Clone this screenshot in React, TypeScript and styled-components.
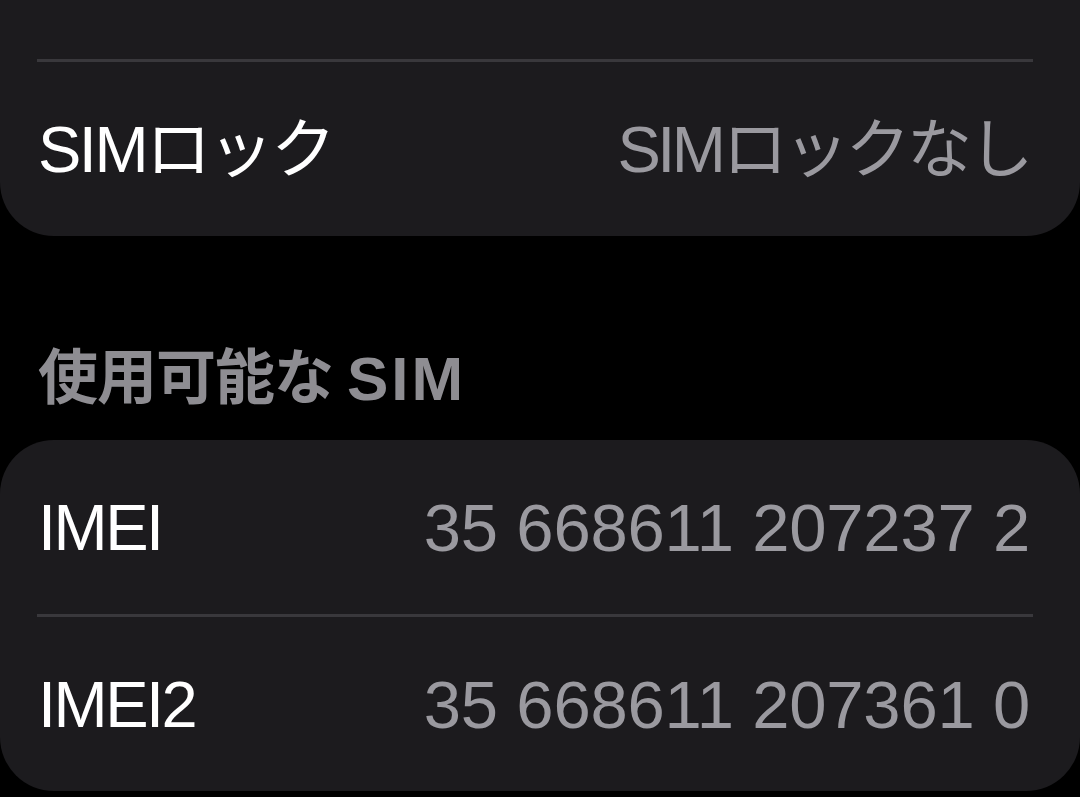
import React from "react";
import styled, { createGlobalStyle } from "styled-components";

const Global = createGlobalStyle`
  html, body {
    margin: 0;
    padding: 0;
    background: #000;
    overflow: hidden;
  }
  #root {
    width: 1080px;
    height: 797px;
    overflow: hidden;
  }
`;

const Screen = styled.div`
  width: 1080px;
  height: 797px;
  background: #000;
  overflow: hidden;
  font-family: "Liberation Sans", "Noto Sans CJK JP", sans-serif;
`;

const Scroller = styled.div`
  display: flex;
  flex-direction: column;
  margin-top: -115px;
`;

const Card = styled.section`
  background: #1c1b1e;
  border-radius: 54px;
  display: flex;
  flex-direction: column;
  overflow: hidden;
`;

const Row = styled.div`
  height: 174px;
  display: flex;
  align-items: center;
  justify-content: space-between;
  padding: 0 50px 0 38px;
  box-sizing: border-box;
`;

const Label = styled.span`
  color: #ffffff;
  font-size: 65px;
  letter-spacing: -2.5px;
  line-height: 1;
  white-space: nowrap;
`;

const Value = styled.span<{ $numeric?: boolean }>`
  color: #9a999f;
  font-size: ${(p) => (p.$numeric ? "67px" : "65px")};
  letter-spacing: ${(p) => (p.$numeric ? "-0.2px" : "-3.5px")};
  line-height: 1;
  white-space: nowrap;
`;

const Separator = styled.div`
  height: 3px;
  background: #39383c;
  margin: 0 47px 0 37px;
`;

const SectionHeader = styled.h2`
  margin: 0;
  padding: 108px 38px 26px;
  height: 70px;
  box-sizing: content-box;
  display: flex;
  align-items: center;
  color: #8e8d92;
  font-size: 60px;
  font-weight: 700;
  letter-spacing: -1px;
  line-height: 70px;
  white-space: pre;
`;

const HeaderLatin = styled.span`
  margin-left: 14px;
  font-size: 62px;
  letter-spacing: 3px;
`;

type Item = { label: string; value?: string; numeric?: boolean };

const List = ({ items }: { items: Item[] }) => (
  <Card>
    {items.map((it, i) => (
      <React.Fragment key={it.label}>
        {i > 0 && <Separator />}
        <Row>
          <Label>{it.label}</Label>
          {it.value && <Value $numeric={it.numeric}>{it.value}</Value>}
        </Row>
      </React.Fragment>
    ))}
  </Card>
);

export default function App() {
  return (
    <Screen>
      <Global />
      <Scroller>
        <List
          items={[
            { label: "EID" },
            { label: "SIMロック", value: "SIMロックなし" },
          ]}
        />
        <SectionHeader>
          使用可能な<HeaderLatin>SIM</HeaderLatin>
        </SectionHeader>
        <List
          items={[
            { label: "IMEI", value: "35 668611 207237 2", numeric: true },
            { label: "IMEI2", value: "35 668611 207361 0", numeric: true },
          ]}
        />
      </Scroller>
    </Screen>
  );
}
